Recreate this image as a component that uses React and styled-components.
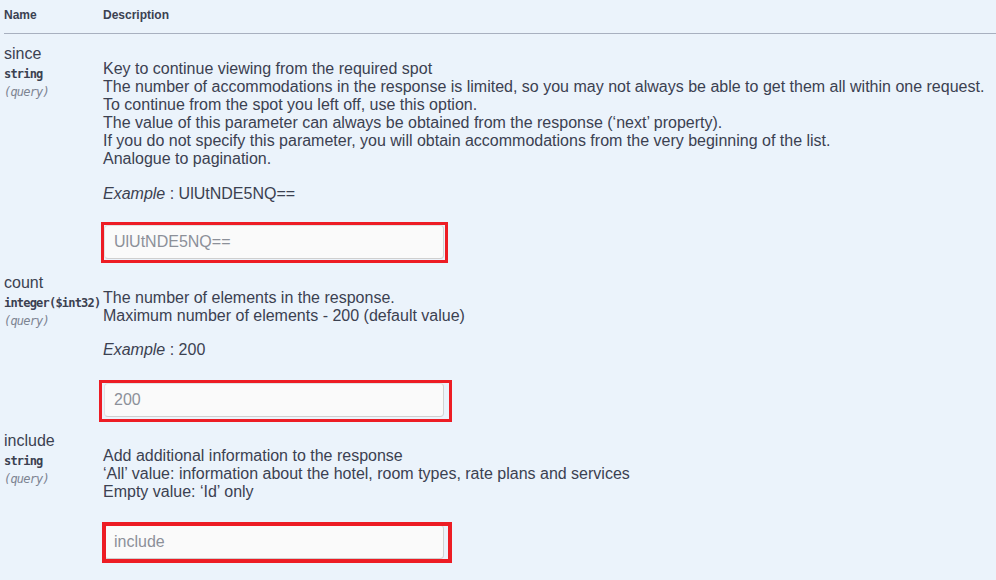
import styled, { createGlobalStyle } from 'styled-components'

const GlobalStyle = createGlobalStyle`
  html, body {
    margin: 0;
    padding: 0;
    background: #ebf3fb;
  }
  body {
    font-family: "Liberation Sans", Arial, sans-serif;
    color: #3b4151;
  }
`

const Table = styled.div`
  width: 996px;
  height: 580px;
  overflow: hidden;
  padding-left: 4px;
  box-sizing: border-box;
`

const HeadRow = styled.div`
  display: grid;
  grid-template-columns: 99px 1fr;
  padding: 8px 0 10px;
  border-bottom: 1px solid #a8b0bf;
`

const HeadCell = styled.div`
  font-size: 12px;
  line-height: 15px;
  font-weight: 700;
`

const Row = styled.div`
  display: grid;
  grid-template-columns: 99px 1fr;
  padding-top: 10px;
`

const NameCell = styled.div`
  white-space: nowrap;
`

const ParamName = styled.div`
  padding-top: 1px;
  font-size: 16px;
  line-height: 18px;
`

const ParamType = styled.div`
  margin-top: 4px;
  font-family: "DejaVu Sans Mono", monospace;
  font-size: 12px;
  letter-spacing: -0.8px;
  line-height: 14px;
  font-weight: 700;
`

const ParamIn = styled.div`
  margin-top: 4px;
  font-family: "DejaVu Sans Mono", monospace;
  font-size: 12px;
  letter-spacing: -0.8px;
  line-height: 14px;
  font-style: italic;
  color: #7d8492;
`

const DescCell = styled.div`
  padding-top: 16px;
  font-size: 16px;
  line-height: 18px;
`

const Para = styled.p`
  margin: 0;
`

const Example = styled.p`
  margin: ${p => p.$gap}px 0 0;
  & i {
    font-style: italic;
  }
`

const InputWrap = styled.div`
  position: relative;
  width: 340px;
  margin: ${p => p.$gap}px 0 4px 1px;
`

const Input = styled.input`
  display: block;
  box-sizing: border-box;
  width: 340px;
  height: 34px;
  padding: 0 9px;
  font-family: "Liberation Sans", Arial, sans-serif;
  font-size: 16px;
  background: #fafafa;
  border: 1px solid #e2e2e2;
  border-right-color: #d2d2d2;
  border-bottom-color: #cfcfcf;
  border-radius: 4px;
  outline: none;
  &::placeholder {
    color: #8c9099;
  }
`

const RedFrame = styled.div`
  position: absolute;
  pointer-events: none;
  border: ${p => p.$w}px solid #ed1c24;
`

const params = [
  {
    name: 'since',
    type: 'string',
    lines: [
      'Key to continue viewing from the required spot',
      'The number of accommodations in the response is limited, so you may not always be able to get them all within one request.',
      'To continue from the spot you left off, use this option.',
      'The value of this parameter can always be obtained from the response (‘next’ property).',
      'If you do not specify this parameter, you will obtain accommodations from the very beginning of the list.',
      'Analogue to pagination.',
    ],
    example: 'UlUtNDE5NQ==',
    exGap: 17,
    inGap: 22,
    frame: { left: -3, top: -3, right: -4, bottom: -4, w: 3 },
  },
  {
    name: 'count',
    type: 'integer($int32)',
    lines: [
      'The number of elements in the response.',
      'Maximum number of elements - 200 (default value)',
    ],
    example: '200',
    exGap: 16,
    inGap: 24,
    frame: { left: -5, top: -3, right: -8, bottom: -5, w: 3 },
  },
  {
    name: 'include',
    type: 'string',
    lines: [
      'Add additional information to the response',
      '‘All’ value: information about the hotel, room types, rate plans and services',
      'Empty value: ‘Id’ only',
    ],
    placeholder: 'include',
    inGap: 24,
    frame: { left: -2, top: -3, right: -8, bottom: -4, w: 4 },
  },
]

const App = () => {
  return (<>
    <GlobalStyle />
    <Table>
      <HeadRow>
        <HeadCell>Name</HeadCell>
        <HeadCell>Description</HeadCell>
      </HeadRow>
      {params.map(p => (
        <Row key={p.name}>
          <NameCell>
            <ParamName>{p.name}</ParamName>
            <ParamType>{p.type}</ParamType>
            <ParamIn>(query)</ParamIn>
          </NameCell>
          <DescCell>
            <Para>
              {p.lines.map((l, i) => (
                <span key={i}>{l}<br /></span>
              ))}
            </Para>
            {p.example && (
              <Example $gap={p.exGap}><i>Example</i> : {p.example}</Example>
            )}
            <InputWrap $gap={p.inGap}>
              <Input type="text" placeholder={p.placeholder || p.example} />
              <RedFrame $w={p.frame.w} style={{
                left: p.frame.left, top: p.frame.top, right: p.frame.right, bottom: p.frame.bottom,
              }} />
            </InputWrap>
          </DescCell>
        </Row>
      ))}
    </Table>
  </>)
}

export default App
